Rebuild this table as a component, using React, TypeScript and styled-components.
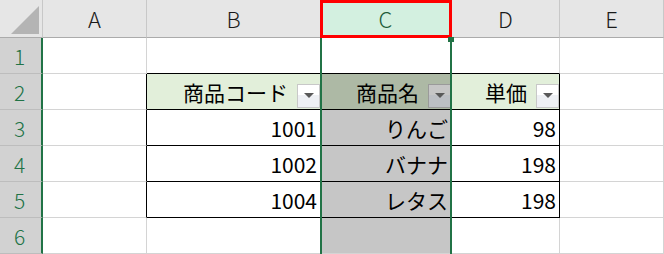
import styled, { createGlobalStyle } from 'styled-components';

const GREEN = '#217346';
const GRID = '#d4d4d4';
const FONT = '"Noto Sans CJK JP", "Noto Sans", sans-serif';

const GlobalStyle = createGlobalStyle`
	html, body {
		margin: 0;
		padding: 0;
		background: #fff;
	}
	body {
		font-family: ${FONT};
	}
`;

type Fill = 'white' | 'header' | 'headerSel' | 'sel';
type Align = 'left' | 'right';

interface ICellData {
	text?: string;
	fill?: Fill;
	align?: Align;
	filter?: boolean;
	right?: string;
	bottom?: string;
}

const columns = ['A', 'B', 'C', 'D', 'E'];
const selectedCol = 2;

const fills: Record<Fill, string> = {
	white: '#ffffff',
	header: '#e2efda',
	headerSel: '#adb9a5',
	sel: '#c6c6c6',
};

// rows 1..6, columns A..E
const rows: ICellData[][] = [
	[{}, { bottom: '#000' }, { bottom: '#000' }, { bottom: '#000' }, {}],
	[
		{ right: '#000' },
		{ text: '商品コード', fill: 'header', filter: true },
		{ text: '商品名', fill: 'headerSel', filter: true },
		{ text: '単価', fill: 'header', filter: true },
		{},
	],
	[{ right: '#000' }, { text: '1001', align: 'right' }, { text: 'りんご', fill: 'sel', align: 'right' }, { text: '98', align: 'right' }, {}],
	[{ right: '#000' }, { text: '1002', align: 'right' }, { text: 'バナナ', fill: 'sel', align: 'right' }, { text: '198', align: 'right' }, {}],
	[{ right: '#000' }, { text: '1004', align: 'right' }, { text: 'レタス', fill: 'sel', align: 'right' }, { text: '198', align: 'right' }, {}],
	[{}, {}, { fill: 'sel' }, {}, {}],
];

const tableCols = [1, 2, 3];
const tableRows = [1, 2, 3, 4];

const App = () => {
	return (
		<>
			<GlobalStyle />
			<Sheet>
				<Corner>
					<svg width="42" height="37" viewBox="0 0 42 37">
						<polygon points="11,34 39,34 39,6" fill="#b4b4b4" />
					</svg>
				</Corner>
				{columns.map((c, i) => (
					<ColHeader key={c} $col={i + 2} $selected={i === selectedCol}>
						{c}
					</ColHeader>
				))}
				{rows.map((row, r) => (
					<Row key={r} row={row} index={r} />
				))}
				<Selection>
					<FillHandle />
				</Selection>
			</Sheet>
		</>
	);
};

const Row = ({ row, index }: { row: ICellData[]; index: number }) => (
	<>
		<RowHeader $row={index + 2}>{index + 1}</RowHeader>
		{row.map((cell, c) => {
			const inTable = tableRows.includes(index) && tableCols.includes(c);
			const right = cell.right ?? (inTable ? '#000' : GRID);
			const bottom = cell.bottom ?? (inTable ? '#000' : GRID);
			const fill = cell.fill ?? (c === selectedCol && index > 0 ? 'sel' : 'white');
			return (
				<Cell
					key={c}
					$row={index + 2}
					$col={c + 2}
					$fill={fills[fill]}
					$right={right}
					$bottom={bottom}
					$align={cell.align ?? 'right'}
				>
					{cell.text && <CellText>{cell.text}</CellText>}
					{cell.filter && (
						<FilterButton $selected={fill === 'headerSel'}>
							<Arrow />
						</FilterButton>
					)}
				</Cell>
			);
		})}
	</>
);

export default App;

const Sheet = styled.div`
	display: grid;
	grid-template-columns: 43px 104px 174px 131px 108px 104px;
	grid-template-rows: 38px repeat(6, 36px);
	width: 664px;
	height: 254px;
	overflow: hidden;
	font-family: ${FONT};
	color: #000;
`;

const Corner = styled.div`
	grid-row: 1;
	grid-column: 1;
	background: #e6e6e6;
	border-right: 1px solid #c8c8c8;
	border-bottom: 1px solid #ababab;
	box-sizing: border-box;
	svg {
		display: block;
	}
`;

const ColHeader = styled.div<{ $col: number; $selected: boolean }>`
	grid-row: 1;
	grid-column: ${(p) => p.$col};
	box-sizing: border-box;
	display: flex;
	align-items: center;
	justify-content: center;
	font-size: 22px;
	font-weight: 300;
	background: ${(p) => (p.$selected ? '#d3f0e0' : '#e6e6e6')};
	color: ${(p) => (p.$selected ? '#1f5c3a' : '#1a1a1a')};
	border-right: 1px solid #c8c8c8;
	border-bottom: 1px solid #ababab;
	${(p) => p.$selected && `outline: 3px solid #ff0000; outline-offset: -3px; margin-left: -1px;`}
	position: relative;
	z-index: 1;
	padding-bottom: 1px;
`;

const RowHeader = styled.div<{ $row: number }>`
	grid-row: ${(p) => p.$row};
	grid-column: 1;
	box-sizing: border-box;
	display: flex;
	align-items: center;
	justify-content: center;
	padding-right: 2px;
	font-size: 21px;
	font-weight: 300;
	color: ${GREEN};
	background: #d2d2d2;
	border-right: 2px solid ${GREEN};
	border-bottom: 1px solid #bdbdbd;
`;

const Cell = styled.div<{ $row: number; $col: number; $fill: string; $right: string; $bottom: string; $align: Align }>`
	grid-row: ${(p) => p.$row};
	grid-column: ${(p) => p.$col};
	box-sizing: border-box;
	display: flex;
	align-items: center;
	justify-content: ${(p) => (p.$align === 'right' ? 'flex-end' : 'flex-start')};
	gap: 9px;
	padding-right: 3px;
	background: ${(p) => p.$fill};
	border-right: 1px solid ${(p) => p.$right};
	border-bottom: 1px solid ${(p) => p.$bottom};
	font-size: 21px;
	white-space: nowrap;
	&:has(button) {
		padding-right: 0;
	}
`;

const CellText = styled.span`
	line-height: 1;
	padding-top: 2px;
`;

const FilterButton = styled.button<{ $selected: boolean }>`
	box-sizing: border-box;
	width: 23px;
	height: 24px;
	padding: 0;
	margin: 0 0 1px;
	align-self: flex-end;
	display: flex;
	justify-content: center;
	align-items: flex-start;
	padding-top: 8px;
	border: 1px solid ${(p) => (p.$selected ? '#9a9a9a' : '#c8c8c8')};
	background: ${(p) =>
		p.$selected
			? 'linear-gradient(#c6c6c6 0 45%, #bcbfc4 45% 100%)'
			: 'linear-gradient(#ffffff 0 45%, #eef0f4 45% 100%)'};
`;

const Arrow = styled.span`
	width: 0;
	height: 0;
	border-left: 5px solid transparent;
	border-right: 5px solid transparent;
	border-top: 5px solid #595959;
`;

// green outline around the selected column, drawn over the cells
const Selection = styled.div`
	grid-column: 4;
	grid-row: 2 / -1;
	position: relative;
	margin-left: -1px;
	box-sizing: border-box;
	border-left: 2px solid ${GREEN};
	border-right: 2px solid ${GREEN};
	pointer-events: none;
	z-index: 2;
`;

const FillHandle = styled.div`
	position: absolute;
	top: -1px;
	right: -4px;
	width: 6px;
	height: 5px;
	background: ${GREEN};
`;
